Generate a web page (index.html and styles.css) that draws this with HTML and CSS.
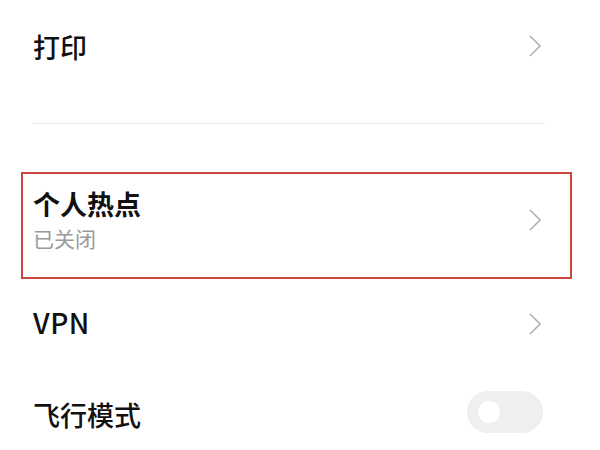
FILE: index.html
```html
<!DOCTYPE html>
<html lang="zh-CN">
<head>
    <meta charset="UTF-8">
    <meta name="viewport" content="width=device-width, initial-scale=1.0">
    <title>设置</title>
    <link rel="stylesheet" href="styles.css">
</head>
<body>
    <div class="list">
        <div class="item item-print">
            <span class="title">打印</span>
            <svg class="chevron" viewBox="0 0 12 22"><polyline points="1,1 11,11 1,21"/></svg>
        </div>
        <div class="divider"></div>
        <div class="item item-hotspot">
            <div class="texts">
                <span class="title bold">个人热点</span>
                <span class="subtitle">已关闭</span>
            </div>
            <svg class="chevron" viewBox="0 0 12 22"><polyline points="1,1 11,11 1,21"/></svg>
        </div>
        <div class="item">
            <span class="title latin">VPN</span>
            <svg class="chevron" viewBox="0 0 12 22"><polyline points="1,1 11,11 1,21"/></svg>
        </div>
        <div class="item">
            <span class="title">飞行模式</span>
            <div class="switch"><div class="knob"></div></div>
        </div>
    </div>
</body>
</html>
```

FILE: styles.css
```css
body {
    margin: 0;
    background: #ffffff;
    font-family: "Noto Sans CJK SC", "Noto Sans", sans-serif;
    color: #111111;
}
.list {
    display: flex;
    flex-direction: column;
}
.item {
    height: 90px;
    display: flex;
    align-items: center;
    justify-content: space-between;
    padding: 0 59px 0 33px;
}
.item-print {
    height: 92px;
}
.title {
    font-size: 27px;
    line-height: 27px;
    font-weight: 500;
}
.title.bold {
    font-weight: 700;
}
.title.latin {
    font-size: 28px;
    letter-spacing: 0.5px;
    margin-top: -4px;
}
.subtitle {
    font-size: 21px;
    line-height: 21px;
    color: #9a9a9a;
    margin-top: 11px;
}
.texts {
    display: flex;
    flex-direction: column;
}
.divider {
    height: 1px;
    background: #e6e6e6;
    margin: 31px 55px 0 32px;
}
.item-hotspot {
    height: auto;
    margin: 48px 28px 0 21px;
    border: 2px solid #c8463e;
    padding: 16px 29px 28px 10px;
}
.chevron {
    width: 12px;
    height: 22px;
    fill: none;
    stroke: #b3b3b3;
    stroke-width: 1.6;
}
.switch {
    width: 76px;
    height: 42px;
    border-radius: 21px;
    background: #efefef;
    display: flex;
    align-items: center;
    padding-left: 11px;
    box-sizing: border-box;
    margin-right: -2px;
    margin-top: -5px;
}
.knob {
    width: 22px;
    height: 22px;
    border-radius: 50%;
    background: #ffffff;
}
```
